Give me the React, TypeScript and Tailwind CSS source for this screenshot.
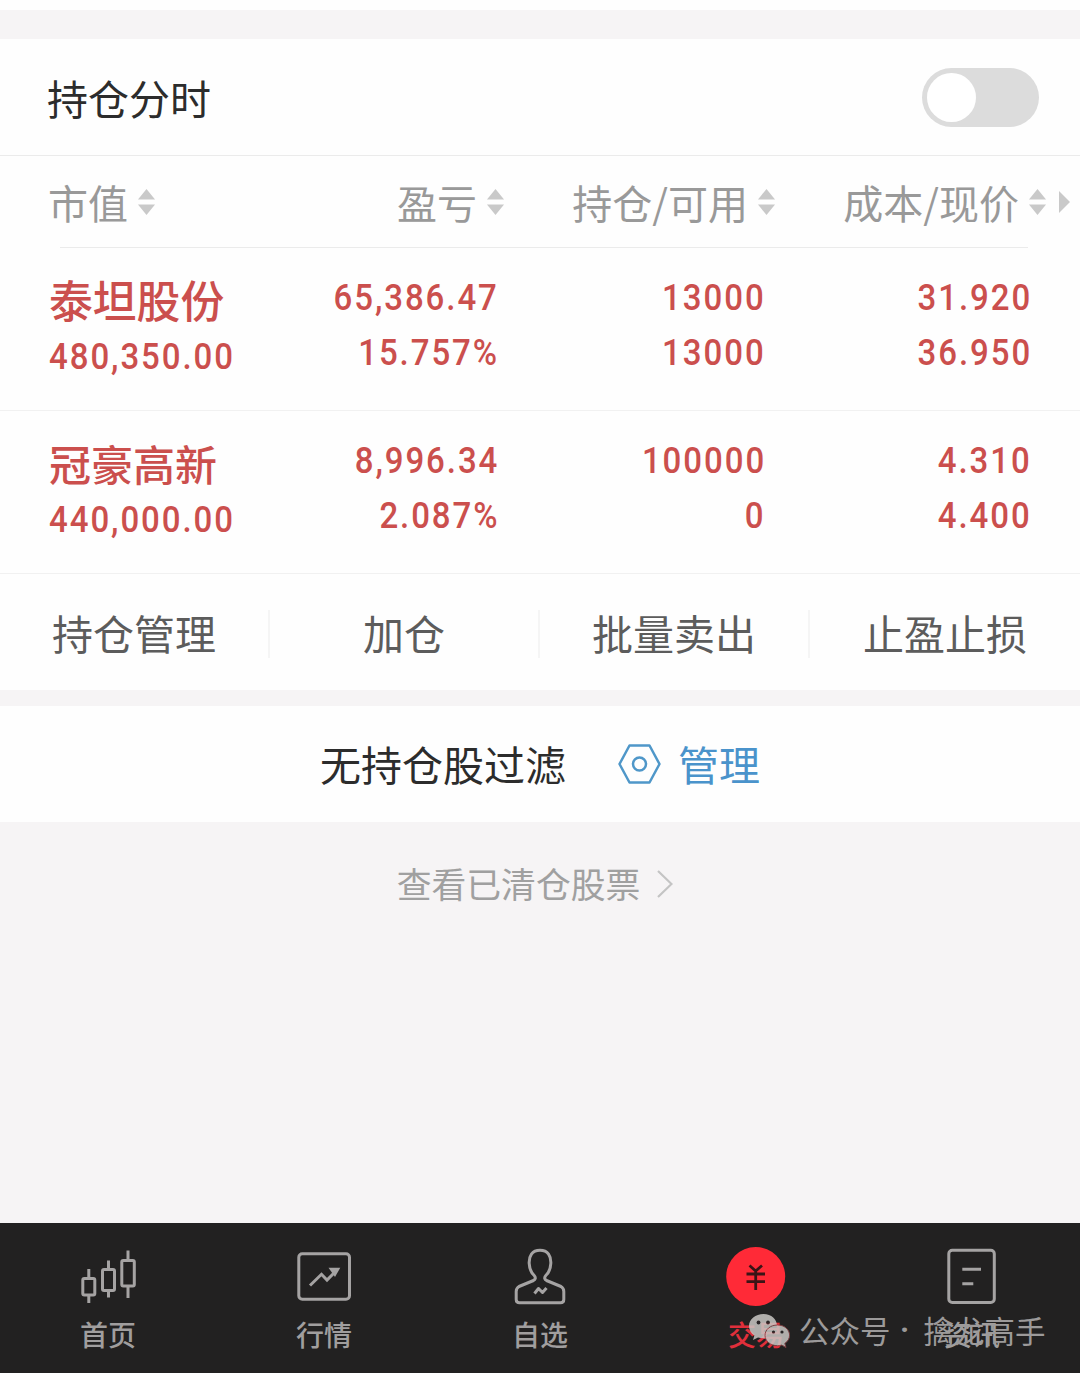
import { useState } from 'react'
import type { ReactNode } from 'react'
import clsx from 'clsx'

type Holding = {
  name: string
  nameClass: string
  value: string
  profit: string
  rate: string
  amount: string
  available: string
  cost: string
  price: string
}

const holdings: Holding[] = [
  {
    name: '泰坦股份',
    nameClass: 'text-[43.800px]',
    value: '480,350.00',
    profit: '65,386.47',
    rate: '15.757%',
    amount: '13000',
    available: '13000',
    cost: '31.920',
    price: '36.950',
  },
  {
    name: '冠豪高新',
    nameClass: 'text-[42px]',
    value: '440,000.00',
    profit: '8,996.34',
    rate: '2.087%',
    amount: '100000',
    available: '0',
    cost: '4.310',
    price: '4.400',
  },
]

const actions = ['持仓管理', '加仓', '批量卖出', '止盈止损']

function SortIcon() {
  return (
    <svg className="w-[17px] h-[26px] shrink-0" viewBox="0 0 17 26" fill="#c9c9c9">
      <path d="M8.5 0L17 10.5H0z" />
      <path d="M0 15.5H17L8.5 26z" />
    </svg>
  )
}

function HeaderCell({ label, className }: { label: string; className?: string }) {
  return (
    <div className={clsx('flex items-center gap-[10px]', className)}>
      <span className="text-[40px] leading-[60px] text-[#999] whitespace-nowrap">{label}</span>
      <SortIcon />
    </div>
  )
}

function NumberCell({ top, bottom, className }: { top: string; bottom: string; className: string }) {
  return (
    <div className={clsx('flex flex-col items-end pt-[22px]', className)}>
      <Num className="origin-right -mr-px">{top}</Num>
      <Num className="origin-right -mr-px">{bottom}</Num>
    </div>
  )
}

// Narrow, loosely tracked digits
function Num({ children, className }: { children: ReactNode; className?: string }) {
  return (
    <span
      className={clsx(
        'font-[Roboto,sans-serif] font-medium text-[37.5px] leading-[55px] tracking-[2.2px] scale-x-[0.88] whitespace-nowrap',
        className,
      )}
    >
      {children}
    </span>
  )
}

function HoldingRow({ item }: { item: Holding }) {
  return (
    <div className="flex h-[163px] border-b border-[#f1f1f1] pl-[49px] text-[#cb4f4d]">
      <div className="w-[200px] pt-[24px] flex flex-col items-start">
        <span className={clsx('font-medium leading-[55px] mb-[2px] whitespace-nowrap', item.nameClass)}>
          {item.name}
        </span>
        <Num className="origin-left">{item.value}</Num>
      </div>
      <NumberCell top={item.profit} bottom={item.rate} className="w-[249px]" />
      <NumberCell top={item.amount} bottom={item.available} className="w-[267px]" />
      <NumberCell top={item.cost} bottom={item.price} className="w-[266px]" />
    </div>
  )
}

function NavItem({ label, active, children }: { label: string; active?: boolean; children: ReactNode }) {
  return (
    <button className="flex-1 flex flex-col items-center pt-6">
      <svg
        className="w-[60px] h-[60px]"
        viewBox="0 0 60 60"
        fill="none"
        stroke="#a5a3a3"
        strokeWidth="3"
        strokeLinejoin="round"
      >
        {children}
      </svg>
      <span
        className={clsx(
          'text-[28px] leading-[40px] mt-[7px] font-medium',
          active ? 'text-[#e02f3b]' : 'text-[#a09e9e]',
        )}
      >
        {label}
      </span>
    </button>
  )
}

function WechatIcon() {
  return (
    <svg className="w-[41px] h-[34px] opacity-85" viewBox="0 0 41 34">
      <path
        fill="#c9c7c4"
        d="M14.5 0C6.5 0 0 5.200 0 12c0 3.900 2.100 7.300 5.400 9.500L4 26l5-2.600c1.700.5 3.500.8 5.500.8C22.500 24.200 28 19 28 12S22.500 0 14.500 0z"
      />
      <path
        fill="#c9c7c4"
        stroke="#8d4548"
        strokeWidth="1"
        d="M28.500 11C21.500 11 16 15.500 16 21.300s5.500 10.400 12.500 10.400c1.500 0 3-.2 4.300-.6L37 33.500l-1.200-4.100c2.900-1.900 4.800-4.800 4.800-8.100C40.600 15.500 35.300 11 28.500 11z"
      />
      <g fill="#2a2526">
        <circle cx="9.500" cy="8.500" r="1.900" />
        <circle cx="19" cy="8.500" r="1.900" />
        <circle cx="24.500" cy="18" r="1.600" />
        <circle cx="33" cy="18" r="1.600" />
      </g>
    </svg>
  )
}

export default function App() {
  const [enabled, setEnabled] = useState(false)

  return (
    <main className="relative w-[1080px] h-[1373px] flex flex-col bg-[#f6f4f5] overflow-hidden font-['Noto_Sans_CJK_SC',sans-serif]">
      <div className="h-[10px] bg-[#fefefe]" />

      {/* Holdings */}
      <section className="mt-[29px] bg-[#fefefe] h-[651px]">
        <div className="h-[117px] border-b border-[#ebebeb] pl-[47px] pr-[41px] flex items-center justify-between">
          <h1 className="text-[41px] leading-[60px] text-[#2c2c2c]">持仓分时</h1>
          <button
            onClick={() => setEnabled(!enabled)}
            className={clsx(
              'w-[117px] h-[59px] rounded-full px-[5px] flex items-center',
              enabled ? 'bg-[#ff2a37] justify-end' : 'bg-[#dcdcdc]',
            )}
          >
            <span className="size-[49px] rounded-full bg-white" />
          </button>
        </div>

        <div className="h-[91px] pl-[48px] flex items-center">
          <HeaderCell label="市值" className="w-[201px]" />
          <HeaderCell label="盈亏" className="w-[255px] justify-end" />
          <HeaderCell label="持仓/可用" className="w-[271px] justify-end" />
          <HeaderCell label="成本/现价" className="w-[271px] justify-end" />
          <svg className="w-[11px] h-[22px] ml-[13px]" viewBox="0 0 11 22" fill="#c9c9c9">
            <path d="M0 0L11 11L0 22z" />
          </svg>
        </div>
        <div className="h-px ml-[60px] mr-[52px] bg-[#ebebeb]" />

        {holdings.map((item) => (
          <HoldingRow key={item.name} item={item} />
        ))}

        <div className="flex h-[116px] items-center pt-[4px]">
          {actions.map((label, i) => (
            <button
              key={label}
              className={clsx(
                'w-[270px] h-[48px] pb-[3px] flex items-center justify-center text-[41px] text-[#5c5c5c]',
                i < actions.length - 1 && 'border-r-2 border-[#f5f5f5]',
              )}
            >
              {label}
            </button>
          ))}
        </div>
      </section>

      {/* Filter */}
      <section className="mt-4 h-[116px] bg-[#fefefe] flex items-center justify-center">
        <span className="text-[41px] text-[#2c2c2c]">无持仓股过滤</span>
        <svg
          className="w-[43px] h-[40px] ml-[52px]"
          viewBox="0 0 43 40"
          fill="none"
          stroke="#4f97c9"
          strokeWidth="2.500"
          strokeLinejoin="round"
        >
          <path d="M11.500 1.500H31.500L41.500 20L31.500 38.500H11.500L1.500 20z" />
          <circle cx="21.500" cy="20" r="6.500" />
        </svg>
        <span className="text-[41px] text-[#4a93cb] ml-[17px]">管理</span>
      </section>

      <button className="mt-[37px] h-[50px] pr-[10px] flex items-center justify-center gap-[17px] text-[34.800px] text-[#a0a0a0]">
        <span className="pb-px">查看已清仓股票</span>
        <svg className="w-[16px] h-[28px]" viewBox="0 0 16 28" fill="none" stroke="#c4c4c4" strokeWidth="2.200">
          <path d="M1 1L14.500 14L1 27" />
        </svg>
      </button>

      {/* Tab bar */}
      <nav className="mt-auto h-[150px] bg-[#222121] flex">
        <NavItem label="首页">
          <rect x="4.800" y="31.500" width="12" height="16.500" rx="1.500" />
          <path d="M10.800 22V31M10.800 48V56" />
          <rect x="24.500" y="22.500" width="12" height="21" rx="1.500" />
          <path d="M30.500 13.500V22M30.500 44V50.500" />
          <rect x="43.800" y="13.500" width="12.500" height="25.500" rx="1.500" />
          <path d="M50 3.500V13M50 39V51" />
        </NavItem>
        <NavItem label="行情">
          <rect x="4.800" y="6.800" width="50.700" height="45.500" rx="3.500" />
          <path d="M16 38.500L27.500 27.300L33 33L42 24" strokeLinejoin="miter" />
          <path d="M34.500 20.700H46.300L41 30z" fill="#a5a3a3" stroke="none" />
        </NavItem>
        <NavItem label="自选">
          <path d="M30 3.200C22 3.200 18.800 9 19.200 16.500C19.500 23 22 26.500 24.200 28.500C26 30.500 25.500 32.500 23.500 33.500L9 39.500C6.500 41 6.200 42 6.200 44.500V52.500Q6.200 55.800 9.500 55.800H50.500Q53.800 55.800 53.800 52.500V44.500C53.800 42 53.500 41 51 39.500L36.500 33.500C34.500 32.500 34 30.500 35.800 28.500C38 26.500 40.500 23 40.800 16.500C41.200 9 38 3.200 30 3.200z" />
          <path d="M24.500 46.500L28.500 41.500L32.500 45.500L36.500 41" />
        </NavItem>
        <NavItem label="交易" active>
          <circle cx="29.700" cy="29.500" r="29.500" fill="#ff2a37" stroke="none" />
          <path d="M23.500 18.500L29.700 24L36 18.500M20.500 27H39M20.500 34.700H39M29.700 23V43" stroke="#3a1416" strokeWidth="2.800" strokeLinejoin="miter" />
        </NavItem>
        <NavItem label="资讯">
          <rect x="6.800" y="3.200" width="45.500" height="52.300" rx="3.500" />
          <path d="M20.300 22.300H39M20.300 36.700H31.300" />
        </NavItem>
      </nav>

      {/* Account watermark floating over the tab bar */}
      <div className="absolute left-[749px] bottom-[21px] h-[44px] flex items-center text-[30.500px] leading-[44px] text-[#9c9a9a] pointer-events-none">
        <div className="pt-px">
          <WechatIcon />
        </div>
        <span className="ml-[9px]">公众号</span>
        <span className="w-[28px] mr-[5px] text-center font-[Roboto,sans-serif] font-bold">·</span>
        <span>擒龙高手</span>
      </div>
    </main>
  )
}
